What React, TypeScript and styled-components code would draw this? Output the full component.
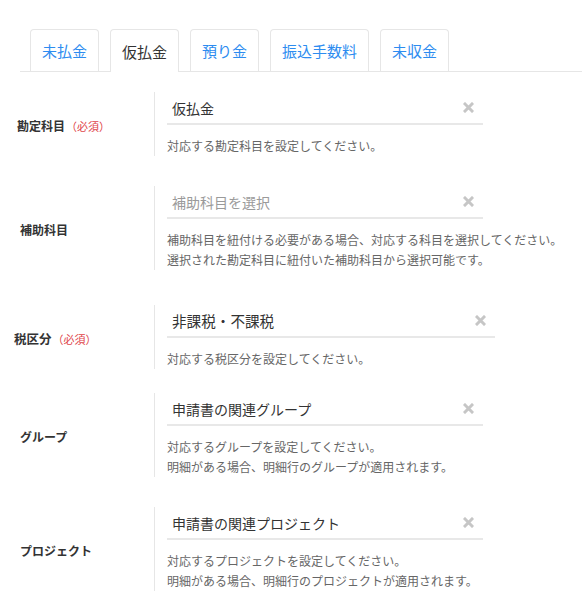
import React from "react";
import styled, { createGlobalStyle } from "styled-components";

const GlobalStyle = createGlobalStyle`
  body {
    margin: 0;
    background: #fff;
    font-family: "Noto Sans CJK JP", "Noto Sans", sans-serif;
    color: #333;
  }
`;

const Page = styled.div`
  padding-top: 29px;
  width: 582px;
`;

const TabBar = styled.div`
  display: flex;
  align-items: flex-end;
  gap: 11px;
  margin-left: 20px;
  padding-left: 10px;
  border-bottom: 1px solid #e6e6e6;
  height: 42px;
`;

const Tab = styled.div<{ $active?: boolean }>`
  box-sizing: border-box;
  height: ${(p) => (p.$active ? "43px" : "42px")};
  margin-bottom: ${(p) => (p.$active ? "-1px" : "0")};
  padding: 0 11px;
  display: flex;
  align-items: center;
  border: 1px solid #e6e6e6;
  border-bottom: none;
  border-radius: 4px 4px 0 0;
  background: #fff;
  font-size: 15px;
  color: ${(p) => (p.$active ? "#333" : "#2d8cf0")};
  white-space: nowrap;
`;

const Form = styled.div`
  padding-top: 20px;
`;

const Row = styled.div<{ $gap: number }>`
  display: grid;
  grid-template-columns: 154px 1fr;
  margin-top: ${(p) => p.$gap}px;
`;

const LabelCell = styled.div<{ $indent: number; $big?: boolean }>`
  display: flex;
  align-items: center;
  padding: 3px 0 0 ${(p) => p.$indent}px;
  font-size: ${(p) => (p.$big ? "12.5px" : "12px")};
  font-weight: bold;
  color: #333;
  white-space: nowrap;
`;

const Required = styled.span`
  font-weight: normal;
  font-size: 11px;
  color: #e0454a;
  margin-left: 1px;
`;

const FieldCell = styled.div`
  border-left: 1px solid #e6e6e6;
  padding-left: 12px;
`;

const Select = styled.div<{ $width: number; $big?: boolean }>`
  box-sizing: border-box;
  width: ${(p) => p.$width}px;
  height: 33px;
  display: flex;
  align-items: center;
  justify-content: space-between;
  padding: 0 9px 0 5px;
  border-bottom: 2px solid #e8e8e8;
  font-size: ${(p) => (p.$big ? "14.6px" : "14px")};
`;

const Value = styled.span<{ $placeholder?: boolean }>`
  color: ${(p) => (p.$placeholder ? "#9a9a9a" : "#333")};
  white-space: nowrap;
`;

const Help = styled.div`
  margin-top: 11px;
  font-size: 12px;
  line-height: 20px;
  color: #666;
  white-space: nowrap;
`;

function ClearIcon() {
  return (
    <svg width="11" height="11" viewBox="0 0 11 11">
      <path
        d="M2 2 L9 9 M9 2 L2 9"
        stroke="#c6c6c6"
        strokeWidth="3"
        strokeLinecap="square"
      />
    </svg>
  );
}

interface FieldRow {
  label: string;
  required?: boolean;
  value: string;
  placeholder?: boolean;
  help: string[];
  gap: number;
  indent: number;
  wide?: boolean;
}

const tabs = ["未払金", "仮払金", "預り金", "振込手数料", "未収金"];

const rows: FieldRow[] = [
  {
    label: "勘定科目",
    required: true,
    value: "仮払金",
    help: ["対応する勘定科目を設定してください。"],
    gap: 0,
    indent: 17,
  },
  {
    label: "補助科目",
    value: "補助科目を選択",
    placeholder: true,
    help: [
      "補助科目を紐付ける必要がある場合、対応する科目を選択してください。",
      "選択された勘定科目に紐付いた補助科目から選択可能です。",
    ],
    gap: 30,
    indent: 20,
  },
  {
    label: "税区分",
    required: true,
    value: "非課税・不課税",
    help: ["対応する税区分を設定してください。"],
    gap: 35,
    indent: 14,
    wide: true,
  },
  {
    label: "グループ",
    value: "申請書の関連グループ",
    help: [
      "対応するグループを設定してください。",
      "明細がある場合、明細行のグループが適用されます。",
    ],
    gap: 24,
    indent: 20,
  },
  {
    label: "プロジェクト",
    value: "申請書の関連プロジェクト",
    help: [
      "対応するプロジェクトを設定してください。",
      "明細がある場合、明細行のプロジェクトが適用されます。",
    ],
    gap: 30,
    indent: 20,
  },
];

export default function App() {
  const active = "仮払金";
  return (
    <Page>
      <GlobalStyle />
      <TabBar>
        {tabs.map((t) => (
          <Tab key={t} $active={t === active}>
            {t}
          </Tab>
        ))}
      </TabBar>
      <Form>
        {rows.map((r) => (
          <Row key={r.label} $gap={r.gap}>
            <LabelCell $indent={r.indent} $big={r.wide}>
              {r.label}
              {r.required && <Required>（必須）</Required>}
            </LabelCell>
            <FieldCell>
              <Select $width={r.wide ? 328 : 316} $big={r.wide}>
                <Value $placeholder={r.placeholder}>{r.value}</Value>
                <ClearIcon />
              </Select>
              <Help>
                {r.help.map((line) => (
                  <div key={line}>{line}</div>
                ))}
              </Help>
            </FieldCell>
          </Row>
        ))}
      </Form>
    </Page>
  );
}
